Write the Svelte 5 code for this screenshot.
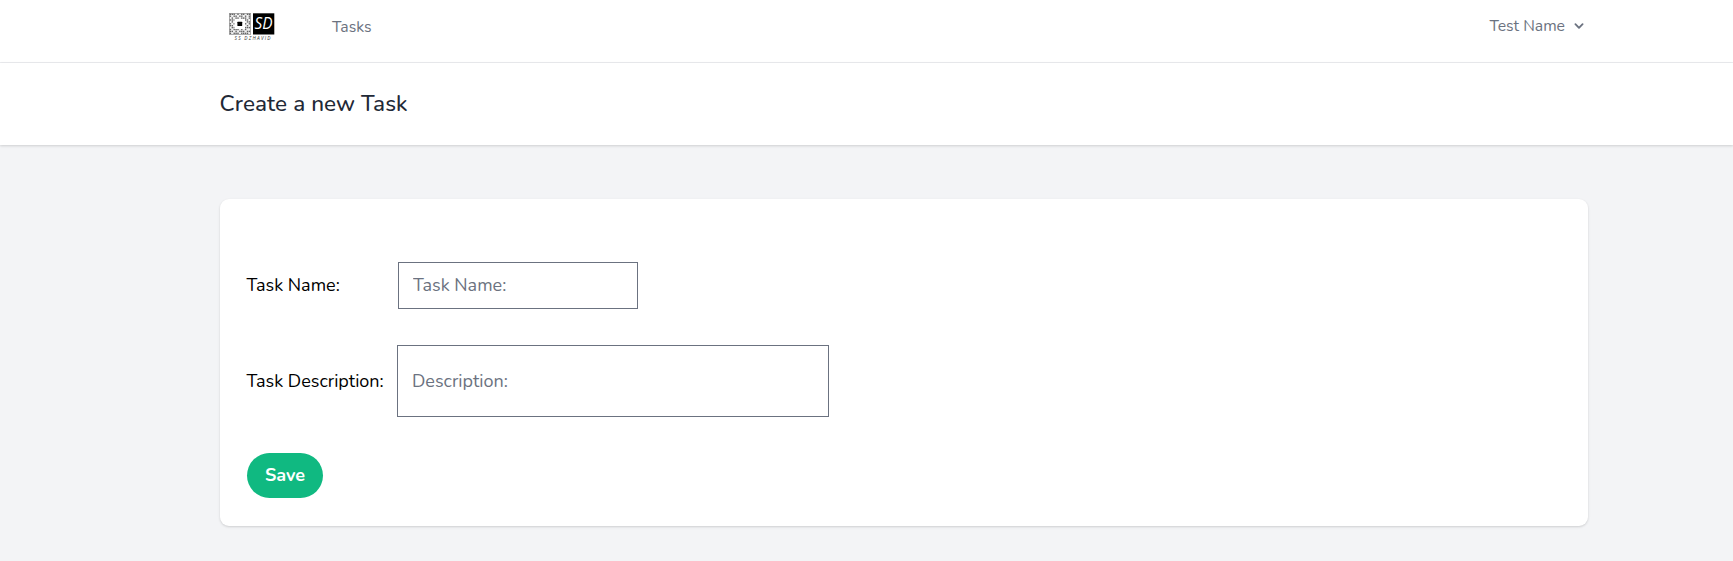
<script>
  let name = $state('');
  let description = $state('');

  // Dark modules of the code mark, as drawn on an 11 x 11 grid.
  const code = [
    '11101011011',
    '10110110101',
    '01011011101',
    '11100000110',
    '01000000011',
    '10100000101',
    '11000000010',
    '01100000111',
    '10111010100',
    '11010111011',
    '10111011110'
  ];
  const modules = code.flatMap((row, y) =>
    [...row].flatMap((cell, x) => (cell === '1' ? [{ x: x * 1.9 + 0.7, y: y * 1.9 + 0.6 }] : []))
  );
</script>

<div class="page">
  <nav>
    <svg class="logo" width="48" height="32" viewBox="0 0 48 32" aria-label="SS Dzhavid">
      <rect x="0.4" y="0.5" width="21.2" height="21" fill="#f0f0f0" stroke="#999" stroke-width="0.8" />
      {#each modules as m}
        <rect x={m.x} y={m.y} width="1.4" height="1.4" fill="#666" />
      {/each}
      <rect x="5.5" y="6" width="10.5" height="10" fill="#fff" />
      <rect x="8.4" y="8.8" width="4.8" height="4.2" rx="0.5" fill="#000" />
      <rect x="24" y="0.3" width="21.3" height="21.2" fill="#000" />
      <text x="25.6" y="16.2" class="initials" textLength="18" lengthAdjust="spacingAndGlyphs">SD</text>
      <text x="5.5" y="27" class="brand" textLength="36">SS DZHAVID</text>
    </svg>
    <a class="link" href="#tasks">Tasks</a>
    <button class="user" type="button">
      <span>Test Name</span>
      <svg width="18" height="18" viewBox="0 0 20 20" fill="#6b7280">
        <path fill-rule="evenodd" clip-rule="evenodd" d="M5.293 7.293a1 1 0 011.414 0L10 10.586l3.293-3.293a1 1 0 111.414 1.414l-4 4a1 1 0 01-1.414 0l-4-4a1 1 0 010-1.414z" />
      </svg>
    </button>
  </nav>
  <header><h2>Create a new Task</h2></header>
  <main>
    <form class="card" onsubmit={(e) => e.preventDefault()}>
      <div class="row first">
        <label for="name">Task Name:</label>
        <input id="name" placeholder="Task Name:" bind:value={name} />
      </div>
      <div class="row second">
        <label class="long" for="description">Task Description:</label>
        <input id="description" placeholder="Description:" bind:value={description} />
      </div>
      <button class="save">Save</button>
    </form>
  </main>
</div>

<style>
  :global(body) { margin: 0; background: #f3f4f6; }
  .page, .page * { box-sizing: border-box; }
  .page {
    height: 561px;
    overflow: hidden;
    background: #f3f4f6;
    font-family: Nunito, Lato, sans-serif;
    font-size: 18px;
    color: #000;
  }
  nav {
    display: flex;
    align-items: flex-start;
    height: 63px;
    padding: 0 145px 0 229px;
    background: #fff;
    border-bottom: 1px solid #ebecef;
  }
  .logo { display: block; margin-top: 13px; flex: none; overflow: visible; }
  .initials { font: italic 15.5px "Open Sans", sans-serif; fill: #fff; }
  .brand { font: italic 4.8px "Open Sans", sans-serif; fill: #333; }
  .link {
    margin: 17px 0 0 55px;
    font-size: 15.75px;
    line-height: 20px;
    color: #6b7280;
    text-decoration: none;
  }
  .user {
    display: flex;
    align-items: center;
    margin: 16px 0 0 auto;
    padding: 0;
    border: 0;
    background: none;
    font: 15.75px/20px Nunito, Lato, sans-serif;
    color: #6b7280;
  }
  .user svg { margin-left: 5px; }
  header {
    position: relative;
    height: 82px;
    padding: 27px 0 0 219.5px;
    background: #fff;
    box-shadow: 0 1px 3px rgb(0 0 0 / 0.1), 0 1px 2px rgb(0 0 0 / 0.06);
  }
  h2 {
    margin: 0;
    font-size: 22.5px;
    line-height: 28px;
    font-weight: 500;
    letter-spacing: 0.08px;
    color: #1f2937;
  }
  main { padding: 54px 145px 0 220px; }
  .card {
    height: 327px;
    padding: 63px 27px 0 26.5px;
    background: #fff;
    border-radius: 9px;
    box-shadow: 0 1px 3px rgb(0 0 0 / 0.1), 0 1px 2px rgb(0 0 0 / 0.06);
  }
  .row { display: flex; align-items: center; }
  .first { height: 47px; }
  .second { height: 72px; margin-top: 36px; }
  label { width: 151.5px; white-space: nowrap; }
  .first label { padding-bottom: 2px; }
  .long { width: 150.5px; }
  input {
    width: 240px;
    height: 47px;
    padding: 0 14px 2px;
    border: 1px solid #6b7280;
    border-radius: 0;
    outline: 0;
    background: #fff;
    font: 18px Nunito, Lato, sans-serif;
  }
  #description { width: 432px; height: 72px; padding-bottom: 0; }
  input::placeholder { color: #6b7280; opacity: 1; }
  .save {
    display: block;
    width: 76px;
    height: 45px;
    margin: 36px 0 0 0.5px;
    padding: 0 0 2px;
    border: 0;
    border-radius: 23px;
    background: #10b981;
    color: #fff;
    font: 700 18px Nunito, Lato, sans-serif;
  }
</style>
